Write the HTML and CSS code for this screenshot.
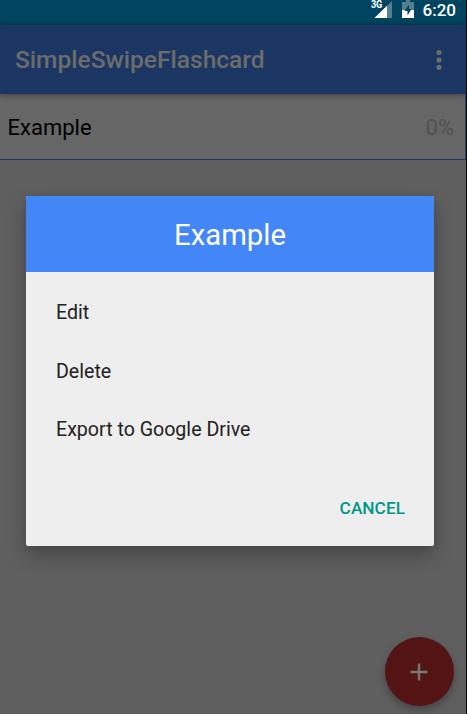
FILE: index.html
```html
<!DOCTYPE html>
<html lang="en">
<head>
<meta charset="utf-8">
<title>SimpleSwipeFlashcard</title>
<link rel="stylesheet" href="styles.css">
</head>
<body>
<div class="screen">
  <div class="status">
    <svg class="signal" width="22" height="20" viewBox="0 0 22 20">
      <path d="M22 1V18H4.500Z" fill="#547f91"/>
      <path d="M17 5.800V18H4.500Z" fill="#fff"/>
    </svg>
    <span class="network">3G</span>
    <svg class="battery" width="12" height="18" viewBox="0 0 12 18">
      <path d="M4 0H8V2H12V10H0V2H4Z" fill="#547f91"/>
      <path d="M0 10H12V18H0Z" fill="#fff"/>
      <path d="M7 4.500L2.500 11H5.500V15.500L9.500 9H7Z" fill="#00445f"/>
    </svg>
    <span class="clock">6:20</span>
  </div>
  <header class="appbar">
    <h1 class="title">SimpleSwipeFlashcard</h1>
    <svg class="more" width="6" height="22" viewBox="0 0 6 22" fill="#6c6c6c">
      <circle cx="3" cy="3.500" r="2.600"/><circle cx="3" cy="11" r="2.600"/><circle cx="3" cy="18.300" r="2.600"/>
    </svg>
  </header>
  <div class="deck"><span class="name">Example</span><span class="percent">0%</span></div>
  <div class="fab">
    <svg width="18" height="18" viewBox="0 0 18 18"><path d="M9 .5V17.500M.5 9H17.500" stroke="#777" stroke-width="2.400"/></svg>
  </div>
  <section class="dialog">
    <h2 class="heading">Example</h2>
    <ul class="options">
      <li>Edit</li>
      <li>Delete</li>
      <li>Export to Google Drive</li>
    </ul>
    <div class="actions"><span class="cancel">CANCEL</span></div>
  </section>
</div>
</body>
</html>
```
FILE: styles.css
```css
* { box-sizing: border-box; }
body { margin: 0; background: #090909; font-family: Roboto, sans-serif; overflow: hidden; }
.screen { position: relative; width: 466px; height: 714px; background: #5f5f5f; overflow: hidden; }
.status { position: relative; display: flex; align-items: flex-start; justify-content: flex-end; height: 25px; padding-right: 10px; background: #00445f; color: #fff; }
.signal { margin-right: 10px; }
.network { position: absolute; left: 370.500px; top: 0; font: 700 10px/10px Roboto, sans-serif; letter-spacing: -.3px; transform: scaleX(.92); transform-origin: left; }
.battery { margin-right: 9px; }
.clock { font-size: 17px; font-weight: 500; line-height: 20px; }
.appbar { position: relative; display: flex; align-items: center; justify-content: space-between; height: 69px; padding: 0 24px 0 15px; background: #1b3663; box-shadow: 0 1px 7px rgba(0,0,0,.4); }
.title { margin: 0; font-size: 24.550px; line-height: 30px; font-weight: 500; color: #6c6c6c; white-space: nowrap; }
.deck { display: flex; align-items: center; justify-content: space-between; height: 66px; padding: 2px 11px 0 7.500px; background: #666; border-bottom: 1px solid #1b3663; border-right: 1px solid #2c4368; font-size: 22px; color: #000; }
.percent { color: #515151; }
.fab { position: absolute; left: 385px; top: 637px; width: 69px; height: 69px; display: flex; align-items: center; justify-content: center; border-radius: 50%; background: #551414; box-shadow: 0 4px 9px rgba(0,0,0,.3); }
.fab svg { margin-right: 1px; }
.dialog { position: absolute; left: 26px; top: 196px; width: 408px; height: 350px; display: flex; flex-direction: column; border-radius: 2px; overflow: hidden; background: #eee; box-shadow: 0 10px 20px rgba(0,0,0,.26), 0 0 7px rgba(0,0,0,.1); }
.heading { margin: 0; height: 76px; padding-top: 1px; background: #4286f7; color: #fff; font-size: 29.300px; font-weight: 400; line-height: 76px; text-align: center; }
.options { margin: 0; padding: 12px 30px 0; list-style: none; font-size: 19.600px; color: #212121; }
.options li { height: 58.700px; line-height: 58.700px; }
.actions { display: flex; justify-content: flex-end; margin-top: auto; padding: 0 29px 26px; }
.cancel { color: #009688; font-size: 17.300px; line-height: 24px; font-weight: 500; }
```
